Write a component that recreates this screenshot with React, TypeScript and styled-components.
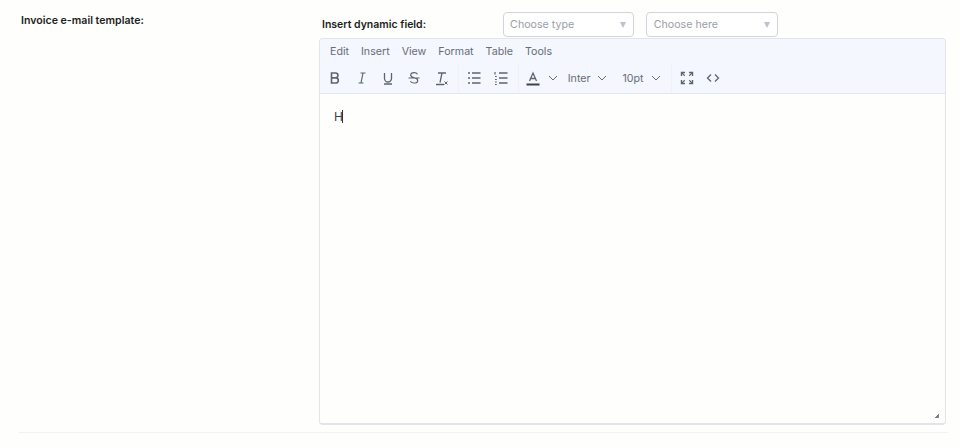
import React from 'react';
import styled, { createGlobalStyle } from 'styled-components';

const GlobalStyle = createGlobalStyle`
  html, body {
    margin: 0;
    padding: 0;
    background: #fefefd;
    font-family: "Inter", "Liberation Sans", sans-serif;
  }
`;

const Icon = ({ children }: { children: React.ReactNode }) => (
  <svg width="24" height="24" viewBox="0 0 24 24" fill="none" stroke="#5d6470" strokeWidth="1.5">
    {children}
  </svg>
);

const Chevron = () => (
  <svg width="10" height="10" viewBox="0 0 10 10" fill="none" stroke="#666c78" strokeWidth="1">
    <path d="M1 3l4 4 4-4" />
  </svg>
);

const App = () => {
  return (
    <Page>
      <GlobalStyle />
      <Row>
        <RowLabel>Invoice e-mail template:</RowLabel>
        <Content>
          <FieldBar>
            <FieldLabel>Insert dynamic field:</FieldLabel>
            <Selects>
              <Select>
                Choose type
                <Caret />
              </Select>
              <Select>
                Choose here
                <Caret />
              </Select>
            </Selects>
          </FieldBar>
          <Editor>
            <Header>
              <MenuBar>
                {['Edit', 'Insert', 'View', 'Format', 'Table', 'Tools'].map((item) => (
                  <MenuItem key={item}>{item}</MenuItem>
                ))}
              </MenuBar>
              <Toolbar>
                <Group>
                  <ToolButton>
                    <Icon>
                      <path d="M8.5 7h4a2.4 2.4 0 0 1 0 4.9h-4zM8.5 11.9h4.7a2.6 2.6 0 0 1 0 5.1H8.5z" strokeWidth="1.6" />
                    </Icon>
                  </ToolButton>
                  <ToolButton>
                    <Icon>
                      <path d="M10.5 7h5M8.5 17h5M13 7l-2 10" strokeWidth="1.2" />
                    </Icon>
                  </ToolButton>
                  <ToolButton>
                    <Icon>
                      <path d="M8.5 7v5.5a3.5 3.5 0 0 0 7 0V7M8 18h8" strokeWidth="1.3" />
                    </Icon>
                  </ToolButton>
                  <ToolButton>
                    <Icon>
                      <path d="M15.5 8.2c-.6-1-1.8-1.6-3.4-1.6-2 0-3.4 1-3.4 2.5 0 3.4 7 1.9 7 5.3 0 1.5-1.5 2.6-3.6 2.6-1.7 0-3-.7-3.7-1.8M6.5 12h11" strokeWidth="1.2" />
                    </Icon>
                  </ToolButton>
                  <ToolButton>
                    <Icon>
                      <path d="M9 7h8M13 7l-2 9.5M7 18.5h8" strokeWidth="1.3" />
                      <path d="M15.5 15.5l3 3M18.5 15.5l-3 3" strokeWidth="1" />
                    </Icon>
                  </ToolButton>
                </Group>
                <Group>
                  <ToolButton>
                    <Icon>
                      <path d="M10 7h8.5M10 12h8.5M10 17h8.5" strokeWidth="1.3" />
                      <path d="M6 7h2M6 12h2M6 17h2" strokeWidth="1.6" />
                    </Icon>
                  </ToolButton>
                  <ToolButton>
                    <Icon>
                      <path d="M10 7h8.5M10 12h8.5M10 17h8.5" strokeWidth="1.3" />
                      <path d="M6 6v2.5M6 10.5h1.8M6 13.5h1.8M6 16h1.8M6 18.5h1.8" strokeWidth="1.2" />
                    </Icon>
                  </ToolButton>
                </Group>
                <Group>
                  <ColorButton>
                    <Icon>
                      <path d="M8.5 15L12 7l3.5 8M9.8 12.5h4.4" strokeWidth="1.3" />
                      <path d="M5.5 18.5h13" stroke="#3c424c" strokeWidth="2" />
                    </Icon>
                    <Chevron />
                  </ColorButton>
                  <SelectButton>
                    Inter
                    <Chevron />
                  </SelectButton>
                  <SelectButton>
                    10pt
                    <Chevron />
                  </SelectButton>
                </Group>
                <Group>
                  <ToolButton>
                    <Icon>
                      <path d="M6.5 10V6.5H10M14 6.5h3.5V10M17.5 14v3.5H14M10 17.5H6.5V14" strokeWidth="1.4" />
                      <path d="M7 7l2.8 2.8M17 7l-2.8 2.8M17 17l-2.8-2.8M7 17l2.8-2.8" strokeWidth="1.1" />
                    </Icon>
                  </ToolButton>
                  <ToolButton>
                    <Icon>
                      <path d="M10 8.5L6.5 12l3.5 3.5M14 8.5l3.5 3.5-3.5 3.5" strokeWidth="1.3" />
                    </Icon>
                  </ToolButton>
                </Group>
              </Toolbar>
            </Header>
            <Body>
              <Typed>H</Typed>
              <ResizeHandle />
            </Body>
          </Editor>
        </Content>
      </Row>
    </Page>
  );
};

export default App;

const Page = styled.div`
  width: 960px;
  height: 448px;
  box-sizing: border-box;
  padding: 0 12px 0 19px;
  overflow: hidden;
`;

const Row = styled.div`
  display: flex;
  height: 433px;
  box-sizing: border-box;
  padding: 12px 2px 7px 0;
  border-bottom: 1px solid #f2f2f4;
`;

const RowLabel = styled.div`
  width: 300px;
  padding: 1px 0 0 2px;
  box-sizing: border-box;
  font-size: 10.6px;
  line-height: 15px;
  font-weight: 600;
  color: #1b1d21;
`;

const Content = styled.div`
  flex: 1;
  display: flex;
  flex-direction: column;
  min-width: 0;
`;

const FieldBar = styled.div`
  display: flex;
  align-items: flex-start;
  height: 26px;
  padding-left: 3px;
`;

const FieldLabel = styled.div`
  width: 180.6px;
  font-size: 10.5px;
  line-height: 25px;
  font-weight: 600;
  color: #1b1d21;
`;

const Selects = styled.div`
  display: flex;
  gap: 12px;
`;

const Select = styled.div`
  position: relative;
  width: 131.6px;
  height: 25px;
  box-sizing: border-box;
  padding-left: 6.5px;
  display: flex;
  align-items: center;
  border: 1px solid #d3d4da;
  border-radius: 4px;
  background: #fff;
  font-size: 10.67px;
  color: #9b9ea6;
`;

const Caret = styled.span`
  position: absolute;
  right: 7px;
  top: 9px;
  width: 0;
  height: 0;
  border-left: 3.5px solid transparent;
  border-right: 3.5px solid transparent;
  border-top: 6px solid #c0c2cb;
`;

const Editor = styled.div`
  flex: 1;
  display: flex;
  flex-direction: column;
  border: 1px solid #e2e4e9;
  border-bottom-width: 2px;
  border-radius: 4px;
  overflow: hidden;
`;

const Header = styled.div`
  background: #f4f7fd;
  border-bottom: 1px solid #e2e7f0;
`;

const MenuBar = styled.div`
  display: flex;
  height: 24px;
  align-items: center;
  padding-left: 4px;
`;

const MenuItem = styled.div`
  padding: 0 6px;
  font-size: 10.67px;
  color: #666c78;
`;

const Toolbar = styled.div`
  display: flex;
  height: 30px;
  align-items: center;
  padding-left: 2px;
`;

const Group = styled.div`
  display: flex;
  align-items: center;
  height: 30px;
  padding-right: 4px;
  margin-right: 2px;
  border-right: 1px solid #eef1f7;

  &:last-child {
    border-right: none;
  }
`;

const ToolButton = styled.div`
  width: 26.4px;
  height: 24px;
  display: flex;
  justify-content: center;
  align-items: center;
`;

const ColorButton = styled.div`
  display: flex;
  align-items: center;
  gap: 3px;
  width: 40px;
`;

const SelectButton = styled.div`
  display: flex;
  align-items: center;
  gap: 6px;
  margin: 0 8px 0 7px;
  font-size: 10.67px;
  color: #666c78;

  &:last-child {
    gap: 7px;
    margin: 0 6px 0 8px;
  }
`;

const Body = styled.div`
  position: relative;
  flex: 1;
  background: #fefefd;
  padding: 16px 14px;
`;

const Typed = styled.div`
  width: fit-content;
  letter-spacing: -0.5px;
  border-right: 1px solid #333;
  font-size: 12px;
  line-height: 13px;
  color: #3a3f47;
`;

const ResizeHandle = styled.span`
  position: absolute;
  right: 6px;
  bottom: 5px;
  width: 4px;
  height: 4px;
  background: linear-gradient(135deg, transparent 50%, #7d8086 50%);
`;
